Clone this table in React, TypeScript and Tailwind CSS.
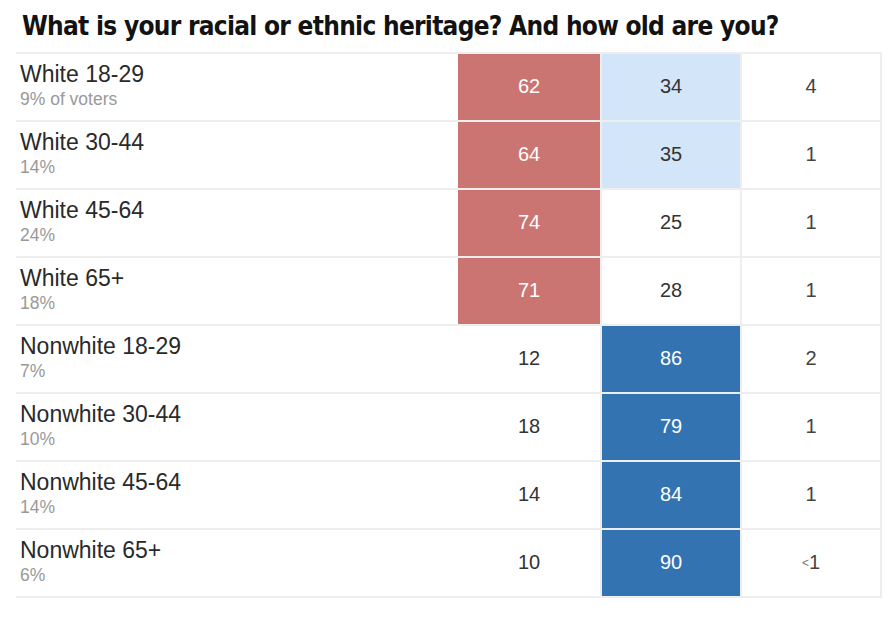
import React from 'react';

type Row = {
    label: string;
    share: string;
    trump: string;
    biden: string;
    other: string;
    lead: 'red' | 'lightblue' | 'blue';
};

const rows: Row[] = [
    { label: 'White 18-29', share: '9% of voters', trump: '62', biden: '34', other: '4', lead: 'lightblue' },
    { label: 'White 30-44', share: '14%', trump: '64', biden: '35', other: '1', lead: 'lightblue' },
    { label: 'White 45-64', share: '24%', trump: '74', biden: '25', other: '1', lead: 'red' },
    { label: 'White 65+', share: '18%', trump: '71', biden: '28', other: '1', lead: 'red' },
    { label: 'Nonwhite 18-29', share: '7%', trump: '12', biden: '86', other: '2', lead: 'blue' },
    { label: 'Nonwhite 30-44', share: '10%', trump: '18', biden: '79', other: '1', lead: 'blue' },
    { label: 'Nonwhite 45-64', share: '14%', trump: '14', biden: '84', other: '1', lead: 'blue' },
    { label: 'Nonwhite 65+', share: '6%', trump: '10', biden: '90', other: '<1', lead: 'blue' },
];

const sans = { fontFamily: '"Liberation Sans", Arial, sans-serif' };

export default function App() {
    return (
        <div className="w-[892px] h-[622px] bg-white pt-[9px]" style={sans}>
            <h2
                className="pl-[22px] text-[26px] leading-[34px] font-bold text-[#121212] tracking-[-0.72px]"
                style={{ fontFamily: '"DejaVu Sans Condensed", "Liberation Sans", sans-serif', fontStretch: 'condensed' }}
            >
                What is your racial or ethnic heritage? And how old are you?
            </h2>

            <div className="ml-4 mt-[9px] w-[866px] border-t-2 border-[#eeeeee]">
                {rows.map(row => {
                    const trumpRed = row.lead !== 'blue';
                    const bidenBg =
                        row.lead === 'blue' ? 'bg-[#3473b1] text-white' : row.lead === 'lightblue' ? 'bg-[#d3e6f9] text-[#333333]' : 'bg-white text-[#333333]';
                    return (
                        <div key={row.label} className="flex h-[68px] border-b-2 border-[#eeeeee]">
                            <div className="w-[442px] pl-1 pt-[8px]">
                                <div className="text-[23px] leading-[25px] text-[#2a2a2a]">{row.label}</div>
                                <div className="text-[17.5px] leading-[25px] text-[#999999]">{row.share}</div>
                            </div>
                            <div
                                className={
                                    'w-[144px] border-r-2 border-[#eeeeee] flex items-center justify-center pb-[2px] text-[20px] ' +
                                    (trumpRed ? 'bg-[#cb7572] text-white' : 'bg-white text-[#333333]')
                                }
                            >
                                {row.trump}
                            </div>
                            <div className={'w-[140px] border-r-2 border-[#eeeeee] flex items-center justify-center pb-[2px] text-[20px] ' + bidenBg}>
                                {row.biden}
                            </div>
                            <div className="w-[140px] border-r-2 border-[#eeeeee] flex items-center justify-center pb-[2px] text-[20px] text-[#444444]">
                                {row.other === '<1' ? (
                                    <span>
                                        <span className="text-[12px] text-[#777777] align-[2px]">&lt;</span>1
                                    </span>
                                ) : (
                                    row.other
                                )}
                            </div>
                        </div>
                    );
                })}
            </div>
        </div>
    );
}
